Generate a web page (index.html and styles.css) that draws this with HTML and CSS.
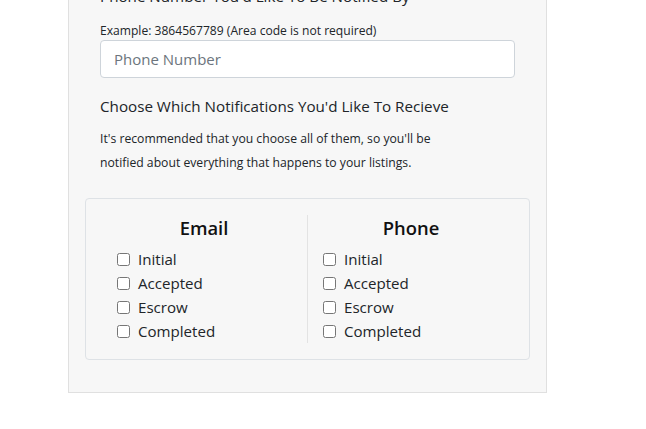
FILE: index.html
```html
<!DOCTYPE html>
<html lang="en">
<head>
<meta charset="utf-8">
<title>Notifications</title>
<link rel="stylesheet" href="styles.css">
</head>
<body>
<div class="panel">
  <div class="field-title">Phone Number You'd Like To Be Notified By</div>
  <div class="hint">Example: 3864567789 (Area code is not required)</div>
  <input class="phone-input" type="text" placeholder="Phone Number">
  <div class="section-title">Choose Which Notifications You'd Like To Recieve</div>
  <p class="desc">It's recommended that you choose all of them, so you'll be<br>notified about everything that happens to your listings.</p>
  <div class="card">
    <div class="col col-left">
      <div class="col-title">Email</div>
      <label class="check"><input type="checkbox"><span>Initial</span></label>
      <label class="check"><input type="checkbox"><span>Accepted</span></label>
      <label class="check"><input type="checkbox"><span>Escrow</span></label>
      <label class="check"><input type="checkbox"><span>Completed</span></label>
    </div>
    <div class="col">
      <div class="col-title">Phone</div>
      <label class="check"><input type="checkbox"><span>Initial</span></label>
      <label class="check"><input type="checkbox"><span>Accepted</span></label>
      <label class="check"><input type="checkbox"><span>Escrow</span></label>
      <label class="check"><input type="checkbox"><span>Completed</span></label>
    </div>
  </div>
</div>
</body>
</html>
```
FILE: styles.css
```css
* { box-sizing: border-box; }
html, body {
  margin: 0;
  padding: 0;
  background: #ffffff;
}
body {
  font-family: "Open Sans", "Noto Sans", sans-serif;
  color: #212529;
}
.panel {
  margin: -17px 0 0 68px;
  width: 479px;
  background: #f7f7f7;
  border: 1px solid #e0e0e0;
  padding: 0 31px 32px 31px;
}
.field-title {
  font-size: 15.2px;
  line-height: 24px;
  margin-bottom: 12px;
}
.hint {
  font-size: 12.1px;
  line-height: 20px;
  padding-top: 1px;
  margin-bottom: -1px;
}
.phone-input {
  display: block;
  width: 100%;
  height: 38px;
  margin: 0;
  padding: 0 12px 0 13px;
  border: 1px solid #ced4da;
  border-radius: 4px;
  background: #fff;
  font-family: inherit;
  font-size: 15px;
  color: #495057;
  outline: none;
}
.phone-input::placeholder { color: #6c757d; }
.section-title {
  margin-top: 16px;
  font-size: 15.2px;
  line-height: 24px;
}
.desc {
  margin: 9px 0 0;
  font-size: 12.2px;
  line-height: 24px;
}
.card {
  margin: 23px -15px 0;
  border: 1px solid #dee2e6;
  border-radius: 4px;
  padding: 16px 15px;
  display: flex;
}
.col {
  flex: 1 1 0;
  padding: 0 15px;
}
.col-left { border-right: 1px solid #e3e3e3; }
.col-title {
  text-align: center;
  font-size: 18.4px;
  font-weight: 600;
  line-height: 24px;
  margin-bottom: 7px;
  color: #111;
  padding-top: 1px;
}
.check {
  display: flex;
  align-items: center;
  height: 24px;
  font-size: 15.1px;
}
.check input {
  width: 13px;
  height: 13px;
  margin: 0 8px 0 1px;
}
.col + .col .check input { margin-left: 0; }
```
